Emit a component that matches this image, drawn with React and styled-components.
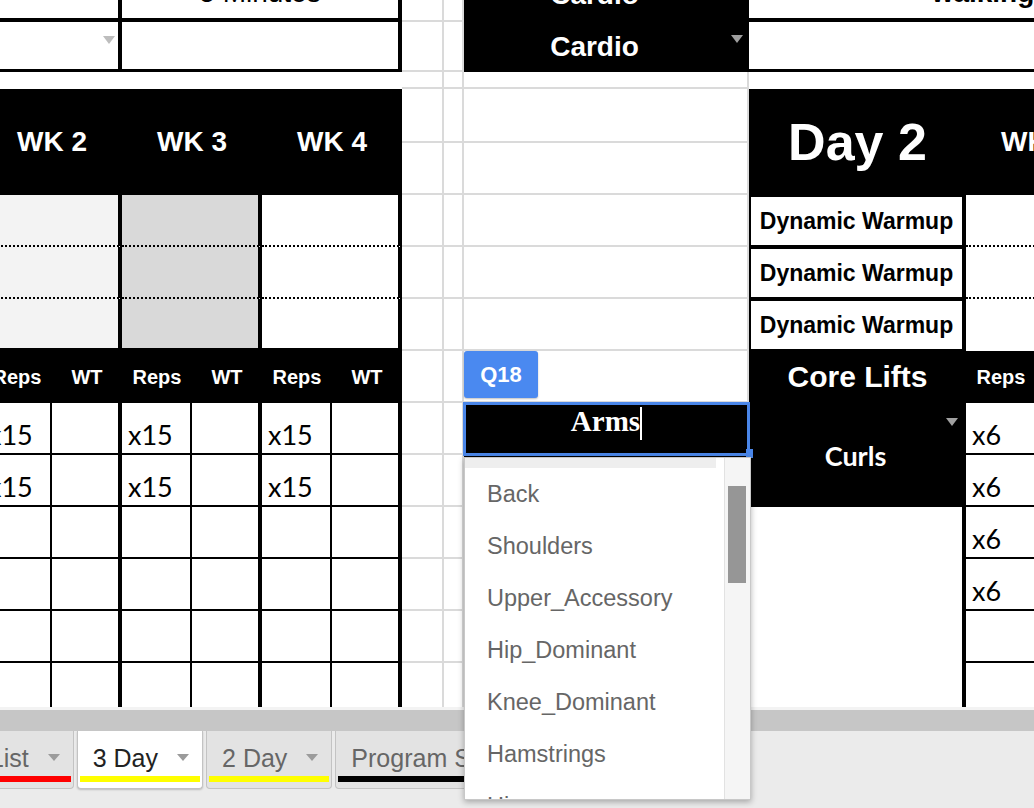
import React from "react";
import styled, { createGlobalStyle } from "styled-components";

const GlobalStyle = createGlobalStyle`
  html, body {
    margin: 0;
    padding: 0;
    background: #fff;
    overflow: hidden;
  }
  * {
    box-sizing: border-box;
  }
`;

const Page = styled.div`
  position: relative;
  width: 1034px;
  height: 808px;
  overflow: hidden;
  display: flex;
  flex-direction: column;
  font-family: "Liberation Sans", Arial, sans-serif;
`;

const Viewport = styled.div`
  flex: none;
  height: 707px;
  overflow: hidden;
`;

// the sheet is scrolled a little right and down
const Sheet = styled.div`
  display: grid;
  grid-template-columns: repeat(6, 70px) 42px 20px 285px 217px repeat(4, 70px);
  grid-template-rows: 54px 50px 17px 54px repeat(11, 52px);
  width: max-content;
  margin: -32px 0 0 -18px;
`;

const Cell = styled.div`
  grid-column: ${(p) => p.$c};
  grid-row: ${(p) => p.$r};
  position: relative;
  display: flex;
  align-items: center;
  justify-content: center;
  overflow: hidden;
  white-space: nowrap;
  background: #fff;
  border-right: ${(p) => p.$br || 0}px solid #000;
  border-bottom: ${(p) => p.$bb || 0}px ${(p) => (p.$dot ? "dotted" : "solid")} #000;
`;

const TableCell = styled(Cell)`
  background: ${(p) => p.$bg || "#fff"};
  color: #000;
  font-size: 28px;
  font-weight: ${(p) => (p.$bold ? 700 : 400)};
  padding-right: ${(p) => p.$pr || 0}px;
`;

const HeadCell = styled(Cell)`
  background: #000;
  color: #fff;
  font-weight: 700;
  font-size: ${(p) => p.$size || 28}px;
  font-family: ${(p) => (p.$lato ? '"Lato", "Liberation Sans", sans-serif' : "inherit")};
  padding-right: ${(p) => p.$pr || 0}px;
`;

const GridCell = styled(Cell)`
  border-right: 2px solid #dadada;
  border-bottom: 2px solid #dadada;
`;

const WarmupCell = styled(Cell)`
  border: 2px solid #000;
  border-right-width: 4px;
  font-size: 23px;
  font-weight: 700;
  color: #000;
`;

const NumCell = styled(Cell)`
  justify-content: flex-start;
  align-items: flex-end;
  padding: 0 0 2px 6px;
  font-family: "Lato", "Liberation Sans", sans-serif;
  font-size: 27px;
  line-height: 1.2;
  color: #000;
`;

const DropArrow = styled.span`
  position: absolute;
  top: ${(p) => p.$top}px;
  right: ${(p) => p.$right}px;
  border-left: 6px solid transparent;
  border-right: 6px solid transparent;
  border-top: 8px solid ${(p) => p.$color};
`;

const EditCell = styled(Cell)`
  background: #000;
  overflow: visible;
  align-items: flex-start;
  padding-top: 2px;
  outline: 3px solid #4a86e8;
  outline-offset: -2px;
  z-index: 2;
`;

const EditText = styled.span`
  font-family: "Liberation Serif", "Times New Roman", serif;
  font-weight: 700;
  font-size: 29px;
  line-height: 33px;
  color: #fff;
`;

const Caret = styled.span`
  display: inline-block;
  width: 2px;
  height: 33px;
  margin-top: 2px;
  background: #fff;
`;

const Badge = styled.div`
  position: absolute;
  left: 0;
  top: -52px;
  width: 74px;
  height: 47px;
  display: flex;
  align-items: center;
  justify-content: center;
  background: #4a89f0;
  color: #fff;
  font-weight: 700;
  font-size: 22px;
  border-radius: 3px;
  box-shadow: 0 1px 2px rgba(0, 0, 0, 0.25);
`;

const Handle = styled.div`
  position: absolute;
  right: -4px;
  bottom: -3px;
  width: 7px;
  height: 9px;
  background: #4a86e8;
`;

const Dropdown = styled.div`
  position: absolute;
  left: 464px;
  top: 457px;
  width: 287px;
  height: 343px;
  display: flex;
  background: #fff;
  border: 1px solid #c8c8c8;
  box-shadow: 0 2px 6px rgba(0, 0, 0, 0.3);
  overflow: hidden;
  z-index: 5;
`;

const OptionList = styled.div`
  flex: 1;
  min-width: 0;
`;

const ListTop = styled.div`
  height: 10px;
  margin-right: 8px;
  background: #eeeeee;
`;

const Option = styled.div`
  height: 52px;
  line-height: 52px;
  padding-left: 22px;
  font-size: 23.5px;
  color: #666;
  white-space: nowrap;
`;

const Track = styled.div`
  flex: none;
  width: 26px;
  padding: 28px 4px 0 3px;
  background: #f5f5f5;
  border-left: 1px solid #e2e2e2;
`;

const Thumb = styled.div`
  height: 97px;
  background: #969696;
`;

const ScrollStrip = styled.div`
  flex: none;
  height: 24px;
  background: #c6c6c6;
  border-top: 3px solid #f3f3f3;
`;

const TabBar = styled.div`
  flex: 1;
  background: #ebebeb;
  overflow: hidden;
`;

const TabStrip = styled.div`
  display: flex;
  gap: 3px;
  margin-left: -129px;
`;

const Tab = styled.div`
  flex: none;
  height: 58px;
  display: flex;
  flex-direction: column;
  padding: 0 2px 6px;
  background: ${(p) => (p.$active ? "#fff" : "#e3e3e3")};
  border: 1px solid #c3c3c3;
  border-top: none;
  border-radius: 0 0 4px 4px;
  box-shadow: ${(p) => (p.$active ? "0 1px 2px rgba(0,0,0,0.2)" : "none")};
`;

const TabLabel = styled.div`
  height: 45px;
  display: flex;
  align-items: center;
  gap: 19px;
  padding: 8px 11px 0 13px;
  font-size: 25px;
  line-height: 28px;
  white-space: nowrap;
  color: ${(p) => (p.$active ? "#222" : "#666")};
`;

const TabArrow = styled.span`
  border-left: 6px solid transparent;
  border-right: 6px solid transparent;
  border-top: 7px solid #9b9b9b;
`;

const TabColor = styled.div`
  height: 6px;
  background: ${(p) => p.$color};
`;

const weekCols = ["1 / 3", "3 / 5", "5 / 7"];
const weekFills = ["#f3f3f3", "#d9d9d9", "#fff"];
const options = [
  "Back",
  "Shoulders",
  "Upper_Accessory",
  "Hip_Dominant",
  "Knee_Dominant",
  "Hamstrings",
  "Hips",
];
const tabs = [
  { name: "Exercise List", color: "#ff0000" },
  { name: "3 Day", color: "#ffff00", active: true },
  { name: "2 Day", color: "#ffff00" },
  { name: "Program Summary", color: "#000" },
];

const range = (a, b) => Array.from({ length: b - a + 1 }, (_, i) => a + i);

const App = () => {
  return (
    <Page>
      <GlobalStyle />
      <Viewport>
        <Sheet>
          {/* left table: top block */}
          <TableCell $c="1 / 3" $r={1} $br={4} $bb={4} />
          <TableCell $c="3 / 7" $r={1} $br={4} $bb={4}>5 Minutes</TableCell>
          <TableCell $c="1 / 3" $r={2} $br={4} $bb={3}>
            <DropArrow $top={14} $right={3} $color="#bdbdbd" />
          </TableCell>
          <TableCell $c="3 / 7" $r={2} $br={4} $bb={3} />

          {/* week headers */}
          <HeadCell $c="1 / 3" $r="4 / 6">WK 2</HeadCell>
          <HeadCell $c="3 / 5" $r="4 / 6">WK 3</HeadCell>
          <HeadCell $c="5 / 7" $r="4 / 6">WK 4</HeadCell>

          {[6, 7, 8].map((r) =>
            weekCols.map((c, i) => (
              <TableCell
                key={`w${r}-${i}`}
                $c={c}
                $r={r}
                $bg={weekFills[i]}
                $br={4}
                $bb={r === 8 ? 3 : 2}
                $dot={r !== 8}
              />
            ))
          )}

          {range(1, 6).map((c) => (
            <HeadCell key={`h${c}`} $c={c} $r={9} $size={20}>
              {c % 2 ? "Reps" : "WT"}
            </HeadCell>
          ))}

          {range(10, 15).map((r) =>
            range(1, 6).map((c) => (
              <NumCell key={`n${r}-${c}`} $c={c} $r={r} $br={c % 2 ? 2 : 4} $bb={2}>
                {r < 12 && c % 2 ? "x15" : ""}
              </NumCell>
            ))
          )}

          {/* blank gridded columns */}
          {range(1, 15).map((r) => (
            <React.Fragment key={`g${r}`}>
              <GridCell $c={7} $r={r} />
              <GridCell $c={8} $r={r} />
            </React.Fragment>
          ))}
          {[3, 4, 5, 6, 7, 8, 9, 12, 13, 14, 15].map((r) => (
            <GridCell key={`q${r}`} $c={9} $r={r} />
          ))}

          {/* cardio block */}
          <HeadCell $c={9} $r={1} $pr={24}>Cardio</HeadCell>
          <HeadCell $c={9} $r={2} $pr={24}>
            Cardio
            <DropArrow $top={13} $right={6} $color="#9e9e9e" />
          </HeadCell>
          <TableCell $c="10 / 15" $r={1} $bb={4} $bold $pr={29}>walking</TableCell>
          <TableCell $c="10 / 15" $r={2} $bb={3} />

          {/* selected cell in edit mode */}
          <EditCell $c={9} $r={10}>
            <Badge>Q18</Badge>
            <EditText>Arms</EditText>
            <Caret />
            <Handle />
          </EditCell>
          <HeadCell $c={9} $r={11} />

          {/* day 2 table */}
          <HeadCell $c={10} $r="4 / 6" $size={52}>Day 2</HeadCell>
          <HeadCell $c="11 / 13" $r="4 / 6">WK 1</HeadCell>
          <HeadCell $c="13 / 15" $r="4 / 6">WK 2</HeadCell>

          {[6, 7, 8].map((r) => (
            <React.Fragment key={`d${r}`}>
              <WarmupCell $c={10} $r={r}>Dynamic Warmup</WarmupCell>
              <TableCell $c="11 / 15" $r={r} $bb={r === 8 ? 0 : 2} $dot />
            </React.Fragment>
          ))}

          <HeadCell $c={10} $r={9} $size={30}>Core Lifts</HeadCell>
          {range(11, 14).map((c) => (
            <HeadCell key={`rh${c}`} $c={c} $r={9} $size={20}>
              {c % 2 ? "Reps" : "WT"}
            </HeadCell>
          ))}

          <HeadCell $c={10} $r="10 / 12" $size={27} $lato $br={4}>
            Curls
            <DropArrow $top={15} $right={4} $color="#a0a0a0" />
          </HeadCell>
          {[12, 13, 14, 15].map((r) => (
            <TableCell key={`e${r}`} $c={10} $r={r} $br={4} />
          ))}

          {range(10, 15).map((r) =>
            range(11, 14).map((c) => (
              <NumCell key={`x${r}-${c}`} $c={c} $r={r} $br={c % 2 ? 2 : 4} $bb={2}>
                {r < 14 && c === 11 ? "x6" : ""}
              </NumCell>
            ))
          )}
        </Sheet>
      </Viewport>

      <ScrollStrip />
      <TabBar>
        <TabStrip>
          {tabs.map((t) => (
            <Tab key={t.name} $active={t.active}>
              <TabLabel $active={t.active}>
                {t.name}
                <TabArrow />
              </TabLabel>
              <TabColor $color={t.color} />
            </Tab>
          ))}
        </TabStrip>
      </TabBar>

      <Dropdown>
        <OptionList>
          <ListTop />
          {options.map((o) => (
            <Option key={o}>{o}</Option>
          ))}
        </OptionList>
        <Track>
          <Thumb />
        </Track>
      </Dropdown>
    </Page>
  );
};

export default App;
